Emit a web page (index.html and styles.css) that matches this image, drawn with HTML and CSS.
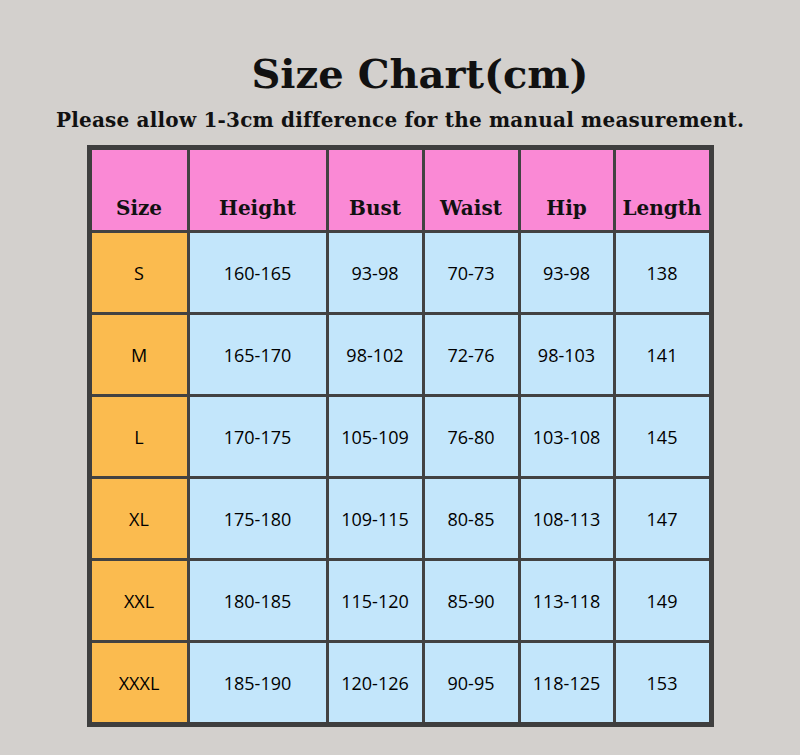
FILE: index.html
```html
<!DOCTYPE html>
<html>
<head>
<meta charset="utf-8">
<link rel="stylesheet" href="styles.css">
</head>
<body>
<div class="page">
  <h1 class="title">Size Chart(cm)</h1>
  <p class="note">Please allow 1-3cm difference for the manual measurement.</p>
  <div class="chart">
    <div class="hd">Size</div><div class="hd">Height</div><div class="hd">Bust</div><div class="hd">Waist</div><div class="hd">Hip</div><div class="hd">Length</div>
    <div class="sz">S</div><div class="v">160-165</div><div class="v">93-98</div><div class="v">70-73</div><div class="v">93-98</div><div class="v">138</div>
    <div class="sz">M</div><div class="v">165-170</div><div class="v">98-102</div><div class="v">72-76</div><div class="v">98-103</div><div class="v">141</div>
    <div class="sz">L</div><div class="v">170-175</div><div class="v">105-109</div><div class="v">76-80</div><div class="v">103-108</div><div class="v">145</div>
    <div class="sz">XL</div><div class="v">175-180</div><div class="v">109-115</div><div class="v">80-85</div><div class="v">108-113</div><div class="v">147</div>
    <div class="sz">XXL</div><div class="v">180-185</div><div class="v">115-120</div><div class="v">85-90</div><div class="v">113-118</div><div class="v">149</div>
    <div class="sz">XXXL</div><div class="v">185-190</div><div class="v">120-126</div><div class="v">90-95</div><div class="v">118-125</div><div class="v">153</div>
  </div>
</div>
</body>
</html>
```
FILE: styles.css
```css
html, body {
  margin: 0;
  padding: 0;
  background: #d3d0cd;
}
.page {
  width: 800px;
  height: 755px;
  display: flex;
  flex-direction: column;
  align-items: center;
  overflow: hidden;
}
.title {
  margin: 50px 0 0 40px;
  font-family: "DejaVu Serif", serif;
  font-weight: bold;
  font-size: 40px;
  line-height: 48px;
  color: #111;
}
.note {
  margin: 10px 0 0 0;
  font-family: "DejaVu Serif", serif;
  font-weight: bold;
  font-size: 20px;
  letter-spacing: 0.2px;
  line-height: 24px;
  color: #111;
  white-space: nowrap;
}
.chart {
  margin: 13px 0 0 0;
  display: grid;
  grid-template-columns: 95px 136px 93px 93px 92px 93px;
  grid-template-rows: 80px repeat(6, 79px);
  gap: 3px;
  background: #424242;
  border: 5px solid #3e3e3e;
}
.hd {
  background: #fa89d5;
  display: flex;
  justify-content: center;
  align-items: center;
  padding-top: 36px;
  box-sizing: border-box;
  font-family: "DejaVu Serif", serif;
  font-weight: bold;
  font-size: 20px;
  color: #111;
  white-space: nowrap;
}
.sz, .v {
  display: flex;
  justify-content: center;
  align-items: center;
  font-family: "Open Sans", sans-serif;
  font-size: 18px;
  color: #000;
}
.sz { background: #fbbb4f; }
.v { background: #c3e6fb; }
```
